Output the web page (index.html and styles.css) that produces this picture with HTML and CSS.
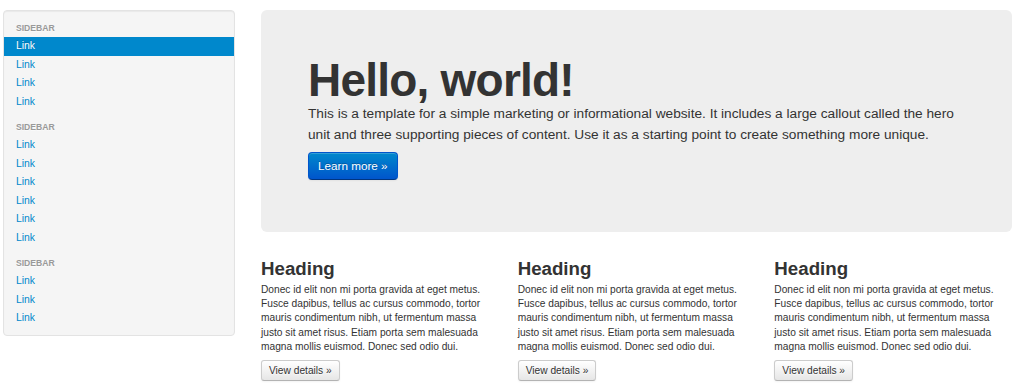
FILE: index.html
```html
<!DOCTYPE html>
<html lang="en">
<head>
    <meta charset="UTF-8">
    <title>Fluid layout</title>
    <link rel="stylesheet" href="styles.css">
</head>
<body>
    <div class="page">
        <div class="sidebar">
            <ul class="nav-list">
                <li class="nav-header">Sidebar</li>
                <li class="active"><a href="#">Link</a></li>
                <li><a href="#">Link</a></li>
                <li><a href="#">Link</a></li>
                <li><a href="#">Link</a></li>
                <li class="nav-header">Sidebar</li>
                <li><a href="#">Link</a></li>
                <li><a href="#">Link</a></li>
                <li><a href="#">Link</a></li>
                <li><a href="#">Link</a></li>
                <li><a href="#">Link</a></li>
                <li><a href="#">Link</a></li>
                <li class="nav-header">Sidebar</li>
                <li><a href="#">Link</a></li>
                <li><a href="#">Link</a></li>
                <li><a href="#">Link</a></li>
            </ul>
        </div>

        <div class="main">
            <div class="hero">
                <h1>Hello, world!</h1>
                <p>This is a template for a simple marketing or informational website. It includes a large callout called the hero unit and three supporting pieces of content. Use it as a starting point to create something more unique.</p>
                <p><a href="#" class="btn btn-primary">Learn more &raquo;</a></p>
            </div>

            <div class="row">
                <div class="col">
                    <h2>Heading</h2>
                    <p>Donec id elit non mi porta gravida at eget metus. Fusce dapibus, tellus ac cursus commodo, tortor mauris condimentum nibh, ut fermentum massa justo sit amet risus. Etiam porta sem malesuada magna mollis euismod. Donec sed odio dui.</p>
                    <p><a href="#" class="btn">View details &raquo;</a></p>
                </div>
                <div class="col">
                    <h2>Heading</h2>
                    <p>Donec id elit non mi porta gravida at eget metus. Fusce dapibus, tellus ac cursus commodo, tortor mauris condimentum nibh, ut fermentum massa justo sit amet risus. Etiam porta sem malesuada magna mollis euismod. Donec sed odio dui.</p>
                    <p><a href="#" class="btn">View details &raquo;</a></p>
                </div>
                <div class="col">
                    <h2>Heading</h2>
                    <p>Donec id elit non mi porta gravida at eget metus. Fusce dapibus, tellus ac cursus commodo, tortor mauris condimentum nibh, ut fermentum massa justo sit amet risus. Etiam porta sem malesuada magna mollis euismod. Donec sed odio dui.</p>
                    <p><a href="#" class="btn">View details &raquo;</a></p>
                </div>
            </div>
        </div>
    </div>
</body>
</html>
```

FILE: styles.css
```css
body{
    margin: 0;
    font-family: "Liberation Sans", Arial, sans-serif;
    color: #333;
    background-color: #fff;
}
a{
    text-decoration: none;
}
.page{
    display: flex;
    gap: 26px;
    padding: 10px 12px 0 3px;
}

/* sidebar */
.sidebar{
    width: 232px;
    flex-shrink: 0;
    box-sizing: border-box;
    align-self: flex-start;
    padding: 8px 0 7px;
    background-color: #f5f5f5;
    border: 1px solid #e3e3e3;
    border-radius: 4px;
    box-shadow: inset 0 1px 1px rgba(0, 0, 0, 0.05);
}
.nav-list{
    list-style: none;
    margin: 0;
    padding: 0;
}
.nav-header{
    padding: 2px 12px;
    font-size: 8.6px;
    line-height: 14px;
    font-weight: bold;
    color: #999;
    text-transform: uppercase;
    text-shadow: 0 1px 0 rgba(255, 255, 255, 0.5);
}
.nav-list li + .nav-header{
    margin-top: 7px;
}
.nav-list a{
    display: block;
    padding: 0 12px;
    font-size: 10.4px;
    line-height: 18.5px;
    color: #0088cc;
}
.nav-list .active a{
    color: #fff;
    background-color: #0088cc;
    text-shadow: 0 -1px 0 rgba(0, 0, 0, 0.2);
}

/* hero */
.main{
    flex: 1;
}
.hero{
    padding: 47px 47px 45px;
    margin-bottom: 23px;
    background-color: #eeeeee;
    border-radius: 6px;
}
.hero h1{
    margin: 0;
    font-size: 46px;
    line-height: 1;
    letter-spacing: -0.78px;
    color: #333;
}
.hero p{
    margin: 0 0 7px;
    font-size: 13.7px;
    line-height: 21px;
}

/* buttons */
.btn{
    display: inline-block;
    padding: 3px 7px;
    font-size: 10.2px;
    line-height: 13px;
    color: #333;
    text-shadow: 0 1px 1px rgba(255, 255, 255, 0.75);
    background-image: linear-gradient(#ffffff, #e6e6e6);
    border: 1px solid #ccc;
    border-bottom-color: #b3b3b3;
    border-radius: 3px;
    box-shadow: inset 0 1px 0 rgba(255, 255, 255, 0.2), 0 1px 2px rgba(0, 0, 0, 0.05);
}
.btn-primary{
    padding: 6px 9px;
    font-size: 11.7px;
    line-height: 14px;
    color: #fff;
    text-shadow: 0 -1px 0 rgba(0, 0, 0, 0.25);
    background-image: linear-gradient(#0088cc, #0055cc);
    border-color: #0055cc #0055cc #003580;
    border-radius: 4px;
}

/* columns */
.row{
    display: flex;
    gap: 19px;
}
.col{
    flex: 1;
}
.col h2{
    margin: 0;
    font-size: 18.7px;
    line-height: 28px;
    color: #333;
}
.col p{
    margin: 0 0 6px;
    font-size: 10.2px;
    line-height: 14.2px;
}
```
